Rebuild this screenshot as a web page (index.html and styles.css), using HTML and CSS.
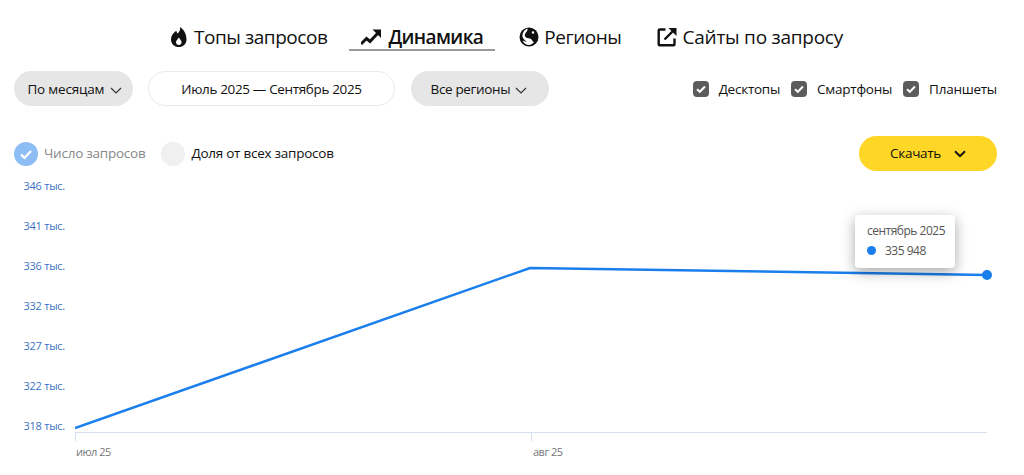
FILE: index.html
```html
<!DOCTYPE html>
<html lang="en">
<head>
  <meta charset="UTF-8">
  <title>Динамика</title>
  <link rel="stylesheet" href="styles.css">
</head>
<body>
  <nav class="tabs">
    <a class="tab">
      <svg class="tab-icon" viewBox="0 0 20 20" width="20" height="20"><path fill="#111" fill-rule="evenodd" d="M11 0c.8 3-.8 4.600-2.400 6.600C7.900 5.800 7.500 5 7.300 3.800 4.200 6 2 8.800 2 12.400 2 16.600 5.400 20 9.800 20s7.700-3.400 7.700-7.600C17.500 7 14.800 2.500 11 0zM9.800 18c-1.600 0-2.800-1.200-2.800-2.800 0-1.800 1.700-2.700 2.800-4.700 1.100 2 2.800 2.900 2.800 4.700 0 1.600-1.200 2.800-2.800 2.800z"/></svg>
      Топы запросов
    </a>
    <a class="tab tab-active">
      <svg class="tab-icon" viewBox="0 0 20 20" width="20" height="20"><path fill="none" stroke="#111" stroke-width="3" d="M0 17l5.500-5.500 3.500 3 8-8.500"/><path fill="#111" d="M11.500 2.500H21v9.500z"/></svg>
      Динамика
    </a>
    <a class="tab tab-regions">
      <svg class="tab-icon" viewBox="0 0 20 20" width="20" height="20"><circle cx="10" cy="10" r="9.500" fill="#111"/><path fill="#fff" d="M8.500 1.500c.5 2-1 3-2 4.500s-1 3.500.5 4.500 3.500.5 5 1.500 1.500 3 3 3c-1 1.500-3 2.800-5 3-3 0-5.500-2-6.500-4.500 1.500.5 3 1 4.500 1.500-1.500-1-3.500-3-4.500-5-.5-4 2-7.500 5-8.500z"/><circle cx="14" cy="5.500" r="1.200" fill="#fff"/></svg>
      Регионы
    </a>
    <a class="tab tab-sites">
      <svg class="tab-icon" viewBox="0 0 20 20" width="20" height="20"><path fill="none" stroke="#111" stroke-width="2.400" d="M8.500 2.500H2.700a1 1 0 0 0-1 1v13.800a1 1 0 0 0 1 1h13.800a1 1 0 0 0 1-1V11.500M7.500 12.500L16 4"/><path fill="#111" d="M11.500 1H19.500v8z"/></svg>
      Сайты по запросу
    </a>
  </nav>

  <div class="filters">
    <button class="pill pill-months">По месяцам <svg class="caret" viewBox="0 0 12 7" width="12" height="7"><path d="M1 1l5 5 5-5"/></svg></button>
    <button class="pill pill-date">Июль 2025 — Сентябрь 2025</button>
    <button class="pill pill-regions">Все регионы <svg class="caret" viewBox="0 0 12 7" width="12" height="7"><path d="M1 1l5 5 5-5"/></svg></button>
    <div class="devices">
      <label class="device"><span class="check"><svg viewBox="0 0 16 16" width="16" height="16"><path d="M4 8.200l2.800 2.600L12 5.500"/></svg></span>Десктопы</label>
      <label class="device"><span class="check"><svg viewBox="0 0 16 16" width="16" height="16"><path d="M4 8.200l2.800 2.600L12 5.500"/></svg></span>Смартфоны</label>
      <label class="device"><span class="check"><svg viewBox="0 0 16 16" width="16" height="16"><path d="M4 8.200l2.800 2.600L12 5.500"/></svg></span>Планшеты</label>
    </div>
  </div>

  <div class="modes">
    <label class="mode mode-on"><span class="radio radio-on"><svg viewBox="0 0 24 24" width="24" height="24"><path d="M7 12.500l3.500 3.300L17 9"/></svg></span><span class="mode-text">Число запросов</span></label>
    <label class="mode"><span class="radio"></span><span class="mode-text">Доля от всех запросов</span></label>
    <button class="download"><span class="mode-text">Скачать</span> <svg viewBox="0 0 12 8" width="12" height="8"><path d="M1 1.200l5 5 5-5"/></svg></button>
  </div>

  <div class="chart">
    <div class="y-axis">
      <span>346 тыс.</span>
      <span>341 тыс.</span>
      <span>336 тыс.</span>
      <span>332 тыс.</span>
      <span>327 тыс.</span>
      <span>322 тыс.</span>
      <span>318 тыс.</span>
    </div>
    <div class="plot">
      <svg viewBox="0 0 949 262" width="949" height="262">
        <path d="M0 253.500H912M.5 253.500V262M456.500 253.500V262" fill="none" stroke="#d6dfef"/>
        <path d="M0 249L455 89 912 96" fill="none" stroke="#1a7fec" stroke-width="2.500"/>
        <circle cx="912" cy="96" r="5" fill="#1a7fec"/>
      </svg>
      <div class="x-axis">
        <span class="x-label">июл 25</span>
        <span class="x-label">авг 25</span>
      </div>
      <div class="tooltip">
        <div>сентябрь 2025</div>
        <div class="tooltip-value"><i class="dot"></i>335 948</div>
      </div>
    </div>
  </div>
</body>
</html>
```

FILE: styles.css
```css
body {
  font-family: "Open Sans", "Noto Sans", sans-serif;
  margin: 0;
  padding: 0;
  background-color: white;
  color: #111;
  overflow: hidden;
}

.tabs {
  display: flex;
  gap: 10px;
  padding: 20px 0 0 157px;
  height: 30px;
  margin-bottom: 21px;
}

.tab {
  display: flex;
  align-items: center;
  gap: 5px;
  padding: 4px 12px 0;
  height: 25px;
  font-size: 19px;
  white-space: nowrap;
  letter-spacing: -0.45px;
}

.tab-icon {
  flex-shrink: 0;
}

.tab-active {
  gap: 7px;
  font-weight: 600;
  letter-spacing: -0.6px;
  border-bottom: 2px solid #999;
}

.tab-regions {
  margin-left: 2px;
}

.tab-sites {
  margin-left: 1px;
  gap: 6px;
  letter-spacing: -0.25px;
}

.filters {
  display: flex;
  align-items: center;
  padding: 0 27px 0 14px;
  height: 35px;
}

.pill {
  font-family: inherit;
  font-size: 13.500px;
  color: #111;
  height: 35px;
  border: none;
  border-radius: 18px;
  background-color: #e6e6e6;
  padding: 0;
  letter-spacing: -0.35px;
}

.pill-months {
  width: 119px;
  letter-spacing: -0.2px;
  padding-left: 2px;
}

.pill-date {
  width: 247px;
  margin-left: 15px;
  background: white;
  border: 1px solid #eaeaea;
}

.pill-regions {
  width: 138px;
  margin-left: 16px;
  padding-right: 2px;
}

.caret {
  margin-left: 2px;
}

.caret path {
  fill: none;
  stroke: #333;
  stroke-width: 1.2;
}

.devices {
  display: flex;
  margin-left: auto;
  gap: 11px;
}

.device {
  display: flex;
  align-items: center;
  gap: 10px;
  font-size: 13.500px;
  letter-spacing: -0.25px;
}

.check {
  display: flex;
  width: 16px;
  height: 16px;
  align-items: center;
  justify-content: center;
  background-color: #5c5c5c;
  border-radius: 4px;
}

.check path {
  fill: none;
  stroke: white;
  stroke-width: 2;
}

.modes {
  display: flex;
  align-items: center;
  padding: 0 27px 0 14px;
  height: 35px;
  margin-top: 30px;
}

.mode {
  display: flex;
  align-items: center;
  gap: 6px;
  font-size: 13.500px;
  letter-spacing: -0.25px;
  margin-right: 16px;
}

.mode-text {
  padding-bottom: 2px;
}

.mode-on {
  color: #888;
}

.radio {
  display: block;
  width: 24px;
  height: 24px;
  border-radius: 50%;
  background-color: #f0f0f0;
}

.radio-on {
  background-color: #8dbdf5;
}

.radio-on path {
  fill: none;
  stroke: white;
  stroke-width: 2.400;
}

.download {
  display: flex;
  align-items: center;
  justify-content: center;
  gap: 13px;
  width: 138px;
  height: 35px;
  margin-left: auto;
  border: none;
  border-radius: 18px;
  background-color: #fdd626;
  color: #111;
  font-family: inherit;
  font-size: 13.500px;
  letter-spacing: -0.3px;
}

.download path {
  fill: none;
  stroke: #111;
  stroke-width: 2;
}

.chart {
  display: flex;
  margin-top: 8px;
}

.y-axis {
  display: flex;
  flex-direction: column;
  justify-content: space-between;
  width: 65px;
  height: 254px;
  text-align: right;
  font-size: 11px;
  line-height: 14px;
  color: #3a72c4;
  letter-spacing: -0.25px;
}

.plot {
  position: relative;
  margin-left: 10px;
}

.plot svg {
  display: block;
}

.x-axis {
  display: flex;
  margin-top: 3px;
  font-size: 11px;
  line-height: 15px;
  color: #777;
  letter-spacing: -0.5px;
}

.x-label {
  width: 456px;
  padding-left: 1px;
}

.tooltip {
  position: absolute;
  left: 780px;
  top: 36px;
  width: 88px;
  height: 47px;
  padding: 6px 0 0 12px;
  background: white;
  border-radius: 4px;
  box-shadow: 0 4px 14px rgba(0, 0, 0, 0.35);
  font-size: 12px;
  line-height: 19px;
  color: #555;
  letter-spacing: -0.5px;
}

.tooltip-value {
  display: flex;
  align-items: center;
  gap: 9px;
  margin-top: 1px;
}

.dot {
  width: 9px;
  height: 9px;
  border-radius: 50%;
  background-color: #1a7fec;
}
```
